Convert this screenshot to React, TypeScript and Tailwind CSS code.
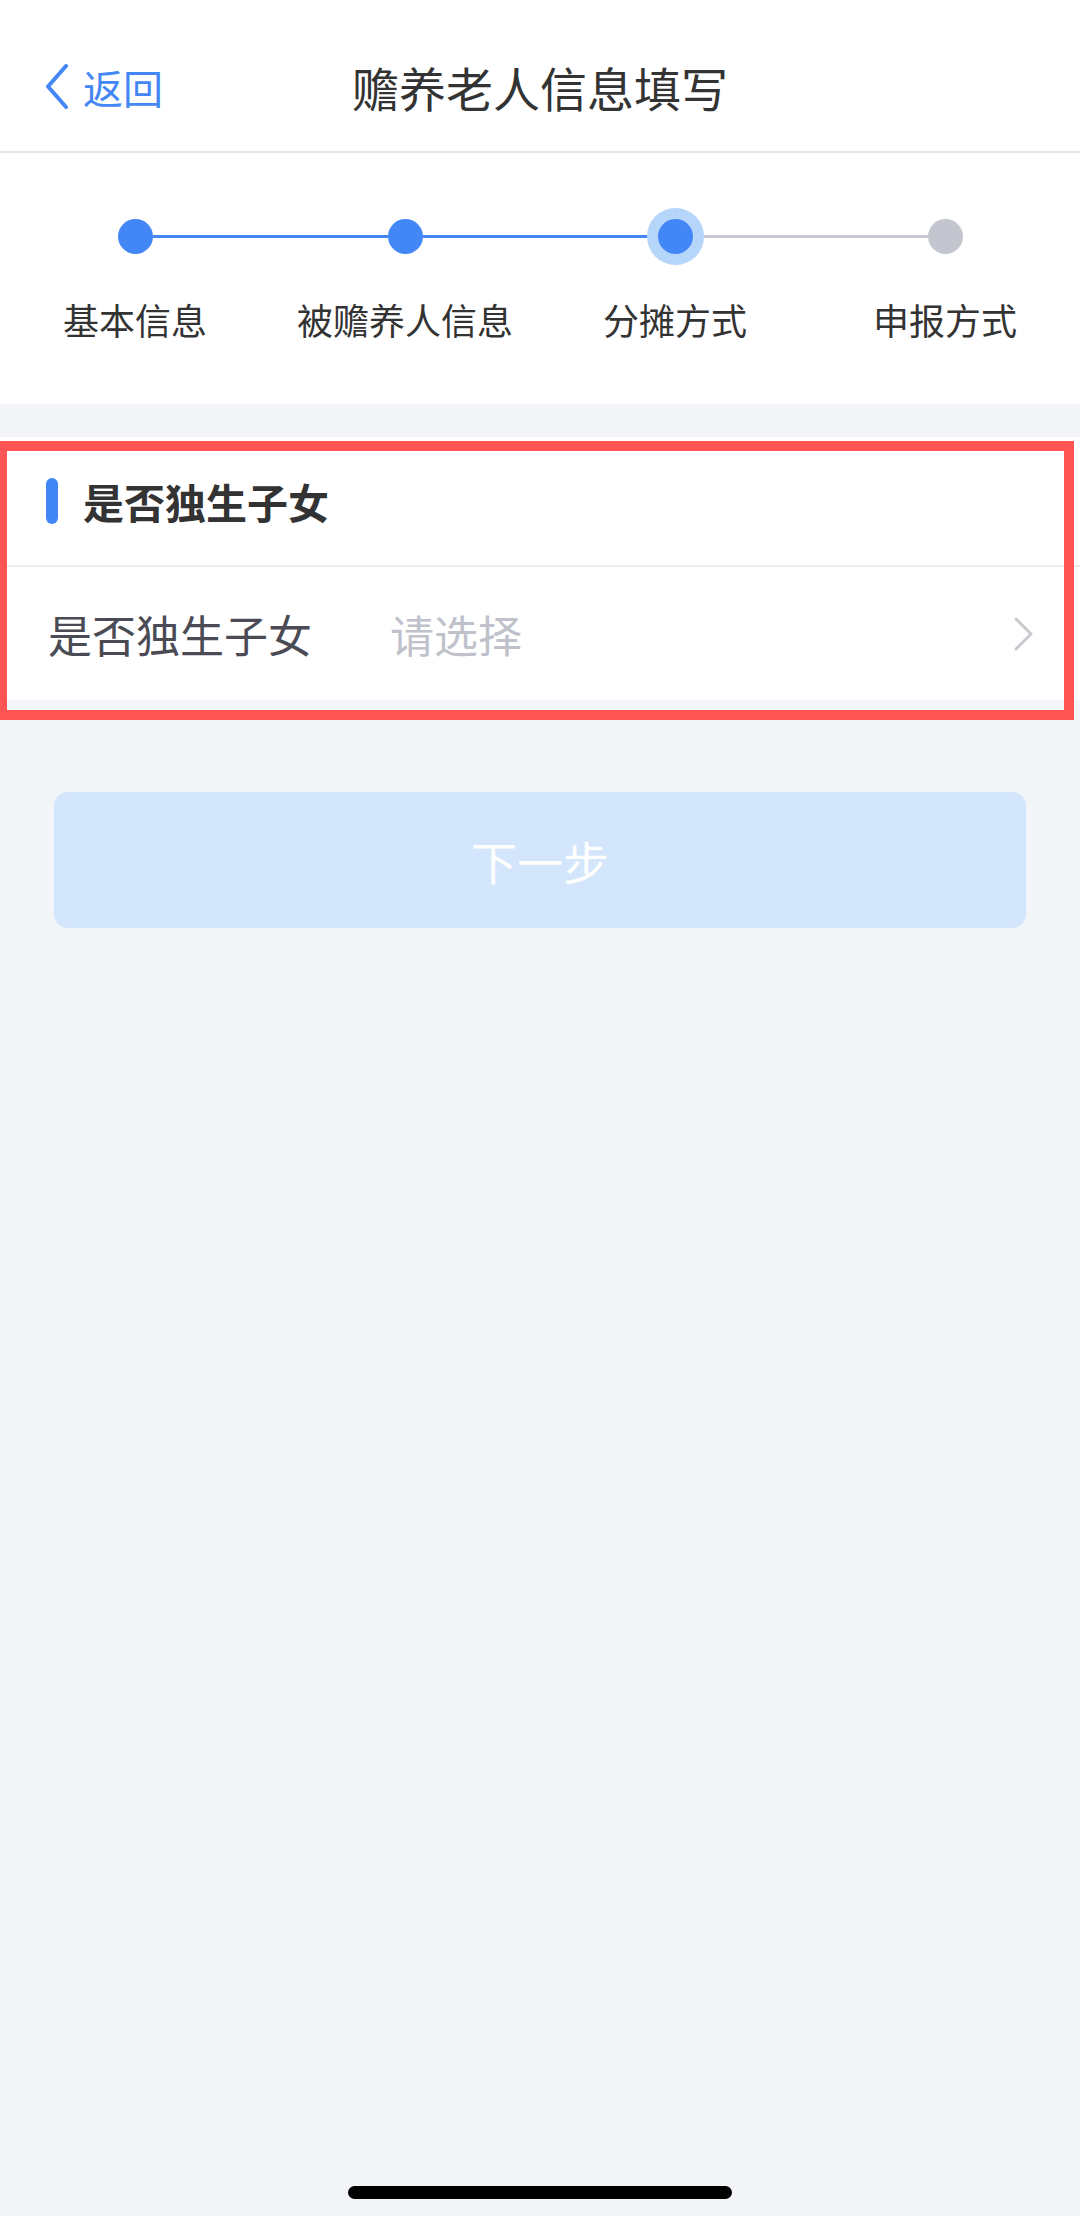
const steps = [
  { label: '基本信息', state: 'done' },
  { label: '被赡养人信息', state: 'done' },
  { label: '分摊方式', state: 'active' },
  { label: '申报方式', state: 'todo' },
];

function lineColor(i: number, side: 'left' | 'right') {
  if (side === 'left' && i === 0) return 'bg-transparent';
  if (side === 'right' && i === steps.length - 1) return 'bg-transparent';
  // segment between step i and neighbour is blue while the further step is reached
  const target = side === 'left' ? i : i + 1;
  return steps[target].state === 'todo' ? 'bg-[#c9cbd3]' : 'bg-[#4387f6]';
}

function Stepper() {
  return (
    <div className="flex bg-white pt-[55px] pb-[60px]">
      {steps.map((s, i) => (
        <div key={s.label} className="flex flex-1 flex-col items-center">
          <div className="flex h-[57px] w-full items-center">
            <div className={`h-[3px] flex-1 ${lineColor(i, 'left')}`} />
            {s.state === 'active' ? (
              <div className="flex h-[57px] w-[57px] items-center justify-center rounded-full bg-[#b5d5fb]">
                <div className="h-[35px] w-[35px] rounded-full bg-[#4387f6]" />
              </div>
            ) : (
              <div
                className={`h-[35px] w-[35px] rounded-full ${
                  s.state === 'done' ? 'bg-[#4387f6]' : 'bg-[#c4c6cf]'
                }`}
              />
            )}
            <div className={`h-[3px] flex-1 ${lineColor(i, 'right')}`} />
          </div>
          <p className="mt-[29px] text-[36px] leading-[50px] text-[#333333]">{s.label}</p>
        </div>
      ))}
    </div>
  );
}

export default function App() {
  return (
    <div
      className="relative flex h-[2216px] w-[1080px] flex-col overflow-hidden bg-[#f4f5f9]"
      style={{ fontFamily: '"Noto Sans CJK SC", "Noto Sans", sans-serif' }}
    >
      {/* nav bar */}
      <div className="border-b-[2px] border-[#e5e6ea] bg-white pt-[44px]">
        <div className="relative flex h-[107px] items-start justify-center">
          <button className="absolute left-[45px] top-[20px] flex items-center gap-[14px] text-[#4387f6]">
            <svg width="24" height="45" viewBox="0 0 24 45" fill="none">
              <polyline
                points="21,2 3,22.5 21,43"
                stroke="#4387f6"
                strokeWidth="4"
                strokeLinecap="round"
                strokeLinejoin="round"
              />
            </svg>
            <span className="text-[40px] leading-[44px]">返回</span>
          </button>
          <h1 className="mt-[13px] text-[47px] leading-[60px] text-[#333333]">赡养老人信息填写</h1>
        </div>
      </div>

      <Stepper />

      {/* form card */}
      <div className="mt-[33px] bg-white">
        <div className="flex h-[130px] items-center border-b-[2px] border-[#ececec] pl-[46px]">
          <div className="h-[46px] w-[12px] rounded-full bg-[#4387f6]" />
          <span className="ml-[25px] text-[41px] font-bold leading-[50px] text-[#333333]">是否独生子女</span>
        </div>
        <div className="flex h-[133px] items-center pl-[48px] pr-[46px]">
          <span className="w-[342px] text-[44px] leading-[56px] text-[#4a4b55]">是否独生子女</span>
          <span className="flex-1 text-[44px] leading-[56px] text-[#c0c2cb]">请选择</span>
          <svg width="21" height="34" viewBox="0 0 21 34" fill="none">
            <polyline
              points="3,2 18,17 3,32"
              stroke="#c8c9ce"
              strokeWidth="3"
              strokeLinecap="round"
              strokeLinejoin="round"
            />
          </svg>
        </div>
      </div>

      {/* annotation frame */}
      <div className="pointer-events-none absolute left-[-3px] top-[441px] h-[279px] w-[1077px] border-[10px] border-[#fe5454]" />

      <div className="mx-[54px] mt-[92px] flex h-[136px] items-center justify-center rounded-[14px] bg-[#d3e6fb]">
        <span className="text-[46px] leading-[56px] text-white">下一步</span>
      </div>

      <div className="absolute bottom-[17px] left-[348px] h-[13px] w-[384px] rounded-full bg-black" />
    </div>
  );
}
